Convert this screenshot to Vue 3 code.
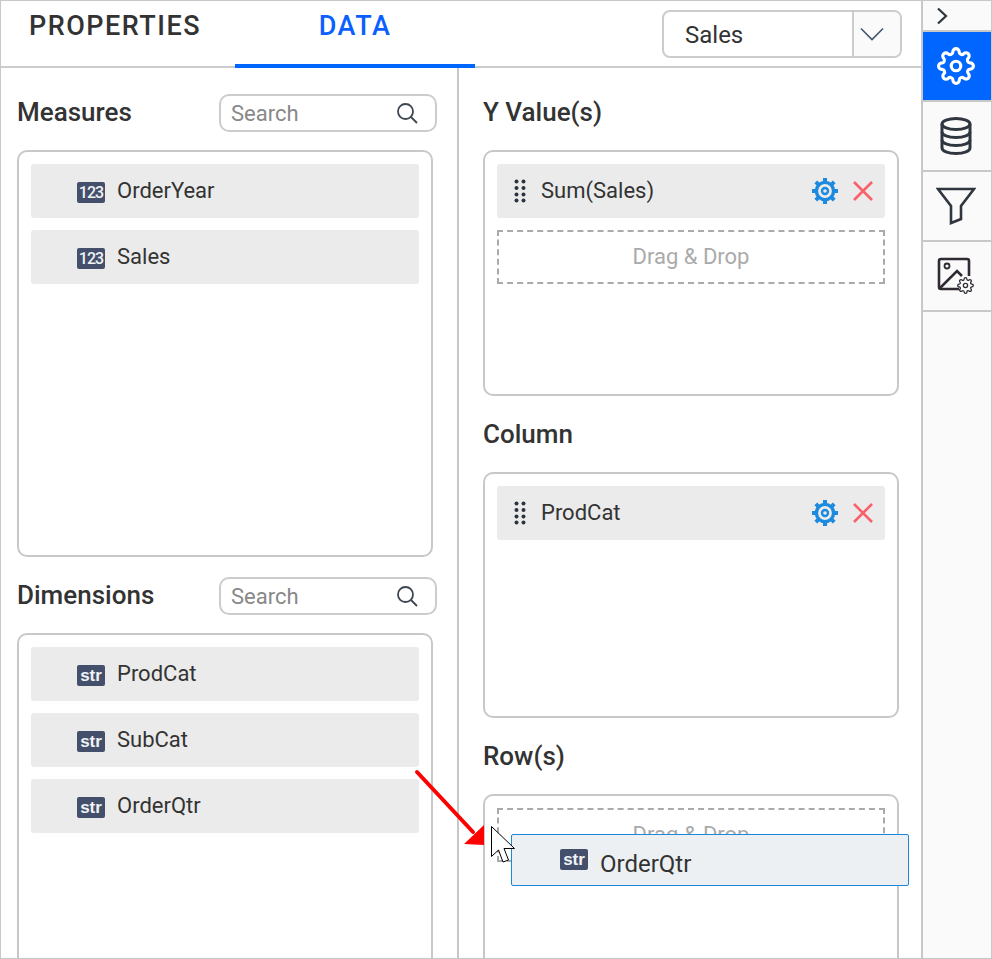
<script setup>
const measures = ['OrderYear', 'Sales']
const dimensions = ['ProdCat', 'SubCat', 'OrderQtr']

const gearPath =
  'M19.4 15a1.65 1.65 0 0 0 .33 1.82l.06.06a2 2 0 0 1 0 2.83 2 2 0 0 1-2.83 0l-.06-.06a1.65 1.65 0 0 0-1.82-.33 1.65 1.65 0 0 0-1 1.51V21a2 2 0 0 1-2 2 2 2 0 0 1-2-2v-.09A1.65 1.65 0 0 0 9 19.4a1.65 1.65 0 0 0-1.82.33l-.06.06a2 2 0 0 1-2.83 0 2 2 0 0 1 0-2.83l.06-.06a1.65 1.65 0 0 0 .33-1.82 1.65 1.65 0 0 0-1.51-1H3a2 2 0 0 1-2-2 2 2 0 0 1 2-2h.09A1.65 1.65 0 0 0 4.6 9a1.65 1.65 0 0 0-.33-1.82l-.06-.06a2 2 0 0 1 0-2.83 2 2 0 0 1 2.83 0l.06.06a1.65 1.65 0 0 0 1.82.33H9a1.65 1.65 0 0 0 1-1.51V3a2 2 0 0 1 2-2 2 2 0 0 1 2 2v.09a1.65 1.65 0 0 0 1 1.51 1.65 1.65 0 0 0 1.82-.33l.06-.06a2 2 0 0 1 2.83 0 2 2 0 0 1 0 2.83l-.06.06a1.65 1.65 0 0 0-.33 1.82V9a1.65 1.65 0 0 0 1.51 1H21a2 2 0 0 1 2 2 2 2 0 0 1-2 2h-.09a1.65 1.65 0 0 0-1.51 1z'

const wells = [
  { title: 'Y Value(s)', field: 'Sum(Sales)', drop: true },
  { title: 'Column', field: 'ProdCat', drop: false },
  { title: 'Row(s)', field: null, drop: true },
]
</script>

<template>
  <div class="Panel">
    <div class="Panel-main">
      <header class="Panel-header">
        <div class="Panel-tab">PROPERTIES</div>
        <div class="Panel-tab is-active">DATA</div>
        <div class="Panel-select">
          <span class="Panel-selectValue">Sales</span>
          <span class="Panel-selectArrow">
            <svg width="24" height="14" viewBox="0 0 24 14" fill="none" stroke="#44566c" stroke-width="1.6">
              <path d="M1 1.5 L12 12.5 L23 1.5" />
            </svg>
          </span>
        </div>
      </header>

      <div class="Panel-body">
        <div class="Fields">
          <div class="Fields-head">
            <h3 class="Title">Measures</h3>
            <div class="Search">
              <span>Search</span>
              <svg width="22" height="22" viewBox="0 0 22 22" fill="none" stroke="#3c4652" stroke-width="1.8">
                <circle cx="9.5" cy="9.5" r="7.5" />
                <path d="M15 15 L21 21" />
              </svg>
            </div>
          </div>
          <div class="Box Box--measures">
            <div v-for="m in measures" :key="m" class="Item">
              <span class="Badge Badge--num">123</span>
              <span class="Item-label">{{ m }}</span>
            </div>
          </div>

          <div class="Fields-head Fields-head--second">
            <h3 class="Title">Dimensions</h3>
            <div class="Search">
              <span>Search</span>
              <svg width="22" height="22" viewBox="0 0 22 22" fill="none" stroke="#3c4652" stroke-width="1.8">
                <circle cx="9.5" cy="9.5" r="7.5" />
                <path d="M15 15 L21 21" />
              </svg>
            </div>
          </div>
          <div class="Box Box--open">
            <div v-for="d in dimensions" :key="d" class="Item">
              <span class="Badge">str</span>
              <span class="Item-label">{{ d }}</span>
            </div>
          </div>
        </div>

        <div class="Wells">
          <section v-for="w in wells" :key="w.title" class="Well">
            <div class="Well-head">
              <h3 class="Title">{{ w.title }}</h3>
            </div>
            <div class="Box Box--well">
              <div v-if="w.field" class="Item Item--well">
                <svg class="Item-grip" width="12" height="24" viewBox="0 0 12 24" fill="#2b3440">
                  <template v-for="y in [2.5, 9, 15.5, 21.5]" :key="y">
                    <circle cx="2.5" :cy="y" r="2" />
                    <circle cx="9.5" :cy="y" r="2" />
                  </template>
                </svg>
                <span class="Item-name Item-label">{{ w.field }}</span>
                <svg class="Item-gear" width="28" height="28" viewBox="0 0 28 28">
                  <circle cx="14" cy="14" r="8.6" fill="none" stroke="#1c8ade" stroke-width="3.400" />
                  <circle cx="14" cy="14" r="3" fill="none" stroke="#1c8ade" stroke-width="2.400" />
                  <g stroke="#1c8ade" stroke-width="4">
                    <path d="M14 1V6M14 22v5M1 14H6M22 14h5M4.800 4.800l3.500 3.500M19.700 19.700l3.500 3.500M4.800 23.200l3.500-3.500M19.700 8.300l3.500-3.500" />
                  </g>
                </svg>
                <svg class="Item-close" width="22" height="22" viewBox="0 0 22 22" stroke="#f9616a" stroke-width="2.600">
                  <path d="M2 2 L20 20 M20 2 L2 20" />
                </svg>
              </div>
              <div v-if="w.drop" class="Drop"><span class="Item-label">Drag &amp; Drop</span></div>
            </div>
          </section>
        </div>
      </div>
    </div>

    <aside class="Rail">
      <div class="Rail-toggle">
        <svg width="12" height="18" viewBox="0 0 12 18" fill="none" stroke="#2d3540" stroke-width="2.200">
          <path d="M2 1.500 L10 9 L2 16.500" />
        </svg>
      </div>
      <div class="Rail-item is-active">
        <svg width="38" height="38" viewBox="0 0 24 24" fill="none" stroke="#fff" stroke-width="2">
          <circle cx="12" cy="12" r="3" />
          <path :d="gearPath" />
        </svg>
      </div>
      <div class="Rail-item">
        <svg width="32" height="38" viewBox="0 0 32 38" fill="none" stroke="#2f3640" stroke-width="3">
          <ellipse cx="16" cy="7" rx="14" ry="5.500" />
          <path d="M2 7V31C2 34 8 36.500 16 36.500S30 34 30 31V7" />
          <path d="M2 15C2 18 8 20.500 16 20.500S30 18 30 15" />
          <path d="M2 23C2 26 8 28.500 16 28.500S30 26 30 23" />
        </svg>
      </div>
      <div class="Rail-item">
        <svg width="40" height="38" viewBox="0 0 40 38" fill="none" stroke="#2f3640" stroke-width="2.600">
          <path d="M2 2H38L25 19V32L15 36V19Z" stroke-linejoin="miter" />
        </svg>
      </div>
      <div class="Rail-item">
        <svg width="38" height="38" viewBox="0 0 38 38" fill="none">
          <path d="M22 32H4A2 2 0 0 1 2 30V4A2 2 0 0 1 4 2H30A2 2 0 0 1 32 4V19" stroke="#2f2a33" stroke-width="2.600" />
          <circle cx="10" cy="9" r="2.500" stroke="#2f2a33" stroke-width="1.800" />
          <path d="M3 31L20 14L25 19" stroke="#2f2a33" stroke-width="2.600" />
          <svg x="20" y="20" width="17" height="17" viewBox="0 0 24 24" stroke="#2f2a33" stroke-width="1.800">
            <circle cx="12" cy="12" r="3" />
            <path :d="gearPath" />
          </svg>
        </svg>
      </div>
    </aside>

    <!-- drag ghost, arrow and pointer sit on top of the panel -->
    <div class="Ghost">
      <span class="Badge">str</span>
      <span class="Ghost-label">OrderQtr</span>
    </div>
    <svg class="Arrow" width="72" height="78" viewBox="0 0 72 78">
      <path d="M4 4 L60 64" stroke="#fe0000" stroke-width="4" stroke-linecap="round" />
      <path d="M71 57 L51 76 L71 77 Z" fill="#fe0000" />
    </svg>
    <svg class="Cursor" width="26" height="40" viewBox="0 0 26 40">
      <path d="M1.500 1.500V31.500L8.500 25L13 37L18.500 35L14 23.500H24.500Z" fill="#fff" stroke="#000" stroke-width="1" />
    </svg>
  </div>
</template>

<style scoped>
.Panel {
  position: relative;
  display: flex;
  width: 992px;
  height: 959px;
  box-sizing: border-box;
  overflow: hidden;
  border: 1px solid #c8c8c8;
  background: #fff;
  color: #333;
  font-family: Roboto, "Liberation Sans", sans-serif;
  font-size: 22px;
}

.Panel-main {
  width: 920px;
  flex: none;
  display: flex;
  flex-direction: column;
}

.Panel-header {
  position: relative;
  display: flex;
  height: 67px;
  flex: none;
  box-sizing: border-box;
  border-bottom: 2px solid #ccc;
}

.Panel-tab {
  width: 234px;
  height: 67px;
  box-sizing: border-box;
  padding: 9px 6px 0 0;
  text-align: center;
  font-size: 27px;
  line-height: 32px;
  font-weight: 500;
  letter-spacing: 1.5px;
  color: #333;
}

.Panel-tab.is-active {
  width: 240px;
  padding-right: 0;
  color: #0b5fff;
  border-bottom: 4px solid #0066ff;
}

.Panel-select {
  display: flex;
  align-items: center;
  position: absolute;
  left: 661px;
  top: 9px;
  width: 240px;
  height: 48px;
  box-sizing: border-box;
  border: 2px solid #ccc;
  border-radius: 8px;
  overflow: hidden;
  font-size: 24px;
}

.Panel-selectValue {
  flex: 1;
  padding: 2px 0 0 21px;
}

.Panel-selectArrow {
  display: flex;
  align-items: center;
  justify-content: center;
  box-sizing: border-box;
  width: 48px;
  height: 100%;
  padding-right: 10px;
  border-left: 2px solid #ccc;
  background: #fafafa;
}

.Panel-body {
  display: flex;
  flex: 1;
  min-height: 0;
}

.Fields {
  width: 458px;
  flex: none;
  box-sizing: border-box;
  padding: 26px 0 0 16px;
  border-right: 2px solid #c8c8c8;
}

.Fields-head,
.Well-head {
  display: flex;
  align-items: center;
  justify-content: space-between;
  width: 420px;
  height: 38px;
  margin-bottom: 18px;
}

.Fields-head--second {
  margin-top: 20px;
}

.Title {
  margin: 0 0 2px;
  font-size: 26px;
  font-weight: 500;
  color: #333;
}

.Search {
  display: flex;
  align-items: center;
  justify-content: space-between;
  width: 218px;
  height: 38px;
  box-sizing: border-box;
  padding: 0 17px 0 10px;
  border: 2px solid #ccc;
  border-radius: 10px;
  color: #888;
}

.Box {
  width: 416px;
  box-sizing: border-box;
  padding: 12px;
  border: 2px solid #c8c8c8;
  border-radius: 10px;
}

.Box--measures {
  height: 407px;
}

.Box--open {
  height: 400px;
}

.Box--well {
  height: 246px;
}

.Item {
  display: flex;
  align-items: center;
  height: 54px;
  margin-bottom: 12px;
  padding-left: 46px;
  gap: 12px;
  border-radius: 3px;
  background: #ebebeb;
}

.Item-label {
  margin-top: -2px;
}

.Item--well {
  padding: 0 11px 0 17px;
  gap: 0;
}

.Item-grip {
  flex: none;
}

.Item-name {
  flex: 1;
  padding-left: 15px;
}

.Item-close {
  margin-left: 13px;
}

.Badge {
  display: inline-flex;
  align-items: center;
  justify-content: center;
  flex: none;
  width: 28px;
  height: 21px;
  margin-top: 3px;
  border-radius: 2px;
  background: #44506b;
  color: #f0f2f5;
  font-family: "Liberation Sans", Arial, sans-serif;
  font-size: 17px;
  font-weight: 700;
}

.Badge--num {
  font-family: Roboto, sans-serif;
  font-size: 16px;
  font-weight: 500;
  letter-spacing: -1px;
}

.Wells {
  flex: 1;
  padding: 26px 0 0 24px;
}

.Well {
  margin-bottom: 20px;
}

.Drop {
  display: flex;
  align-items: center;
  justify-content: center;
  height: 54px;
  box-sizing: border-box;
  border: 2px dashed #aaa;
  color: #aaa;
}

.Rail {
  flex: 1;
  display: flex;
  flex-direction: column;
  border-left: 2px solid #c8c8c8;
  background: #fafafa;
}

.Rail-toggle {
  display: flex;
  align-items: center;
  justify-content: center;
  height: 29px;
  padding-right: 38px;
  border-bottom: 2px solid #c8c8c8;
  padding-left: 8px;
}

.Rail-item {
  display: flex;
  align-items: center;
  justify-content: center;
  height: 68px;
  padding-right: 2px;
  border-bottom: 2px solid #c8c8c8;
}

.Rail-item.is-active {
  background: #0066ff;
}

.Ghost {
  position: absolute;
  left: 510px;
  top: 833px;
  display: flex;
  align-items: center;
  gap: 12px;
  width: 398px;
  height: 52px;
  box-sizing: border-box;
  padding-left: 48px;
  border: 1px solid #1a8ad8;
  border-radius: 2px;
  background: #edf0f3;
  font-size: 24px;
}

.Ghost .Badge {
  margin-top: -1px;
}

.Ghost-label {
  margin-top: 7px;
}

.Arrow {
  position: absolute;
  left: 412px;
  top: 767px;
}

.Cursor {
  position: absolute;
  left: 489px;
  top: 824px;
}
</style>
